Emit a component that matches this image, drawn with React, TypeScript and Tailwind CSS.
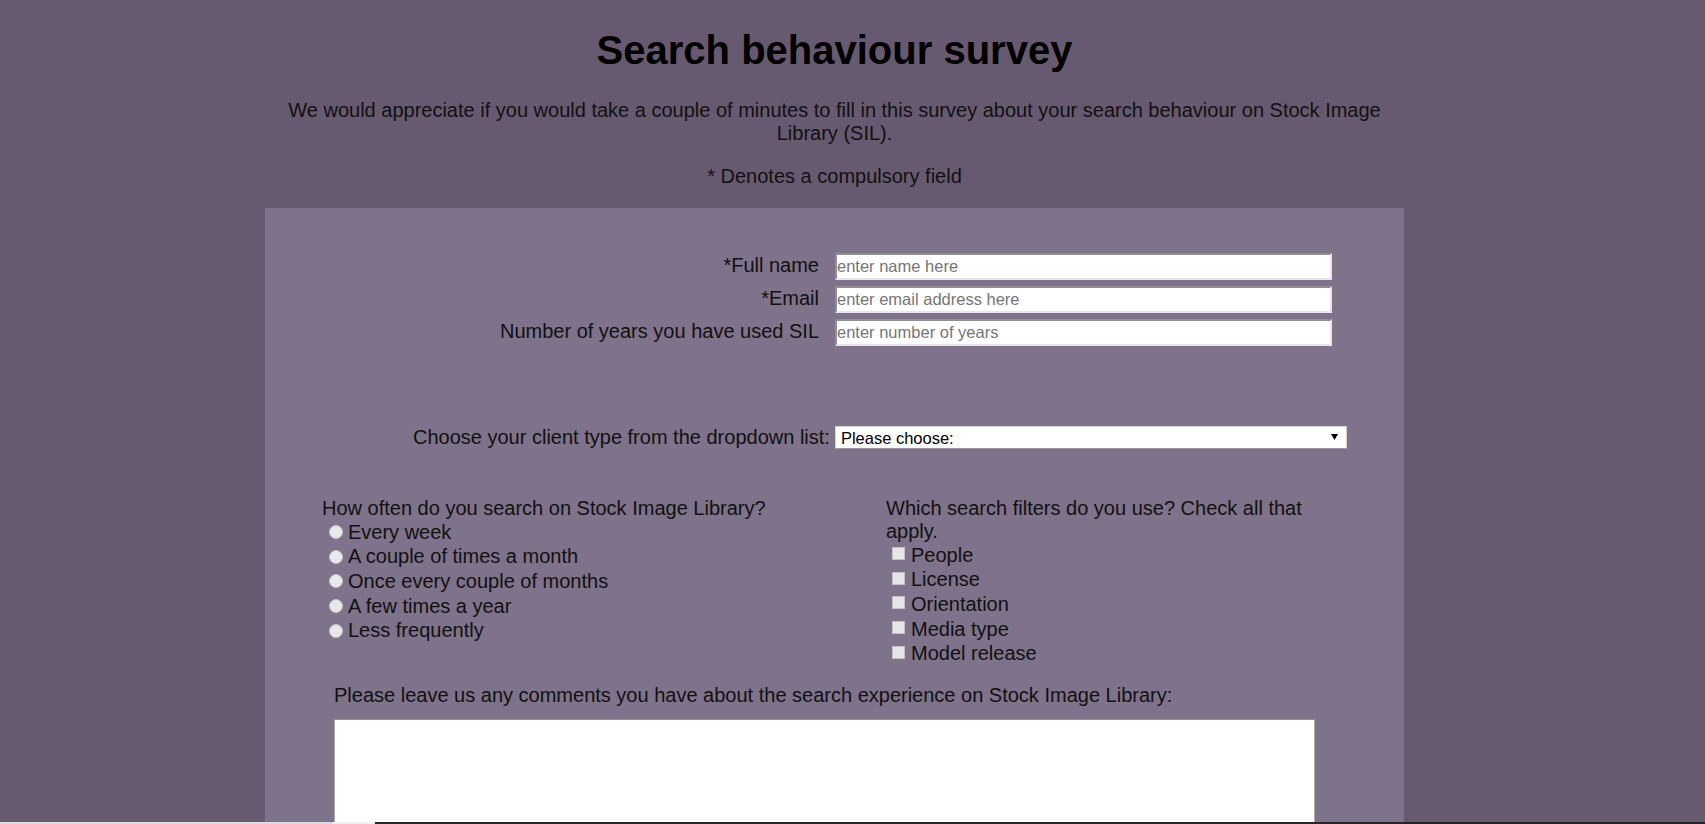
import React from "react";

const fields = [
  { label: "*Full name", placeholder: "enter name here" },
  { label: "*Email", placeholder: "enter email address here" },
  { label: "Number of years you have used SIL", placeholder: "enter number of years" },
];

const radios = [
  "Every week",
  "A couple of times a month",
  "Once every couple of months",
  "A few times a year",
  "Less frequently",
];

const checks = ["People", "License", "Orientation", "Media type", "Model release"];

export default function App() {
  return (
    <div className="relative h-[824px] w-full overflow-hidden bg-[#675a70] font-['Liberation_Sans',Arial,sans-serif] text-[20px] leading-[23px] text-[#111]">
      <div className="ml-[265px] w-[1139px]">
        <h1 className="pt-[27px] text-center text-[40px] font-bold leading-[46px] text-black">
          Search behaviour survey
        </h1>
        <p className="mt-[26px] text-center">
          We would appreciate if you would take a couple of minutes to fill in this survey about your search behaviour on Stock Image Library (SIL).
        </p>
        <p className="mt-[20px] text-center">* Denotes a compulsory field</p>

        <form className="mt-[20px] h-[700px] bg-[#7f728b] pt-[45px]">
          <div className="flex flex-col gap-[6px]">
            {fields.map((f) => (
              <div key={f.label} className="flex h-[27px] items-center">
                <label className="w-[554px] -translate-y-[1px] text-right">{f.label}</label>
                <input
                  type="text"
                  placeholder={f.placeholder}
                  className="ml-[16px] h-[27px] w-[497px] border-2 border-t-[#8f8f8f] border-l-[#8f8f8f] border-r-[#e8e5ee] border-b-[#e8e5ee] bg-white px-0 text-[16.5px] text-black outline-none placeholder:text-[#757575]"
                />
              </div>
            ))}
          </div>

          <div className="mt-[80px] flex h-[23px] items-center pl-[148px]">
            <label className="whitespace-nowrap">Choose your client type from the dropdown list:</label>
            <div className="relative ml-[5px] h-[23px] w-[512px]">
              <select className="h-[23px] w-[512px] appearance-none border border-[#d4d2d8] border-b-[#9c9aa0] bg-white pl-[5px] text-[16.5px] text-black outline-none">
                <option>Please choose:</option>
              </select>
              <svg
                className="pointer-events-none absolute right-[9px] top-[8px]"
                width="7"
                height="6"
                viewBox="0 0 7 6"
              >
                <polygon points="0,0 7,0 3.5,6" fill="#000" />
              </svg>
            </div>
          </div>

          <div className="mt-[48px] flex pl-[57px]">
            <div className="w-[564px]">
              <div>How often do you search on Stock Image Library?</div>
              {radios.map((r) => (
                <label key={r} className="flex h-[24.6px] items-center">
                  <input
                    type="radio"
                    name="freq"
                    className="mr-[5px] ml-[7px] h-[14px] w-[14px] shrink-0 appearance-none rounded-full border border-[#c4c4c4] bg-[#e8e8e8]"
                  />
                  {r}
                </label>
              ))}
            </div>
            <div className="w-[450px]">
              <div>Which search filters do you use? Check all that apply.</div>
              {checks.map((c) => (
                <label key={c} className="flex h-[24.6px] items-center">
                  <input
                    type="checkbox"
                    className="mr-[6px] ml-[6px] mb-[3px] h-[13px] w-[13px] shrink-0 appearance-none border border-[#c2c2c2] bg-[#e6e6e6]"
                  />
                  {c}
                </label>
              ))}
            </div>
          </div>

          <div className="mt-[18px] pl-[69px]">
            <label className="block">
              Please leave us any comments you have about the search experience on Stock Image Library:
            </label>
            <textarea className="mt-[12px] block h-[200px] w-[981px] resize-none border border-[#a9a9a9] border-t-[#8f8f8f] bg-white outline-none" />
          </div>
        </form>
      </div>

      <div className="absolute bottom-0 left-0 right-0 flex h-[2px]">
        <div className="w-[333px] bg-[#dcdcdc]" />
        <div className="w-[42px] bg-[#f2f2f2]" />
        <div className="flex-1 bg-[#262626]" />
      </div>
    </div>
  );
}
